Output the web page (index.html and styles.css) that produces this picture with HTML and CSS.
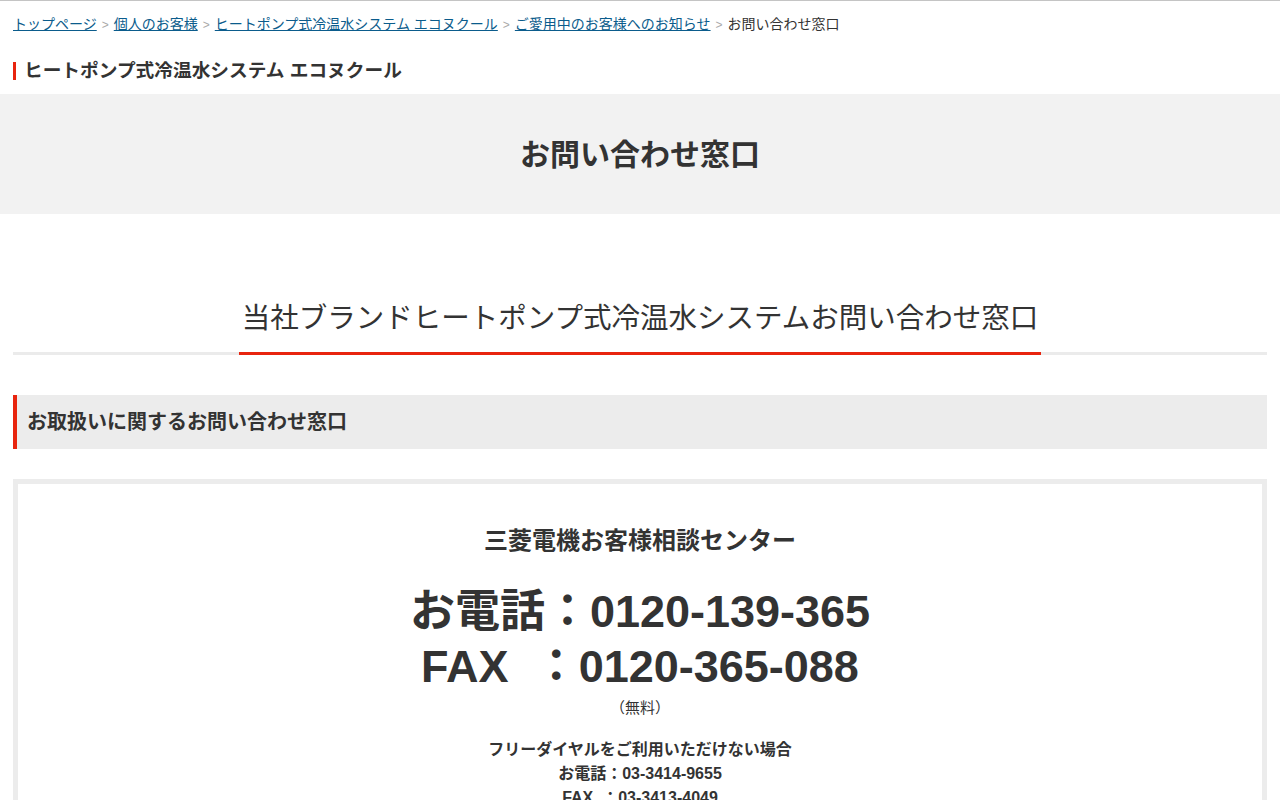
FILE: index.html
```html
<!DOCTYPE html>
<html lang="ja">
<head>
<meta charset="utf-8">
<title>お問い合わせ窓口</title>
<link rel="stylesheet" href="styles.css">
</head>
<body>
<div class="topline"></div>
<nav class="breadcrumb">
  <a href="#">トップページ</a><span class="sep">&gt;</span><a href="#">個人のお客様</a><span class="sep">&gt;</span><a href="#">ヒートポンプ式冷温水システム エコヌクール</a><span class="sep">&gt;</span><a href="#">ご愛用中のお客様へのお知らせ</a><span class="sep">&gt;</span><span class="current">お問い合わせ窓口</span>
</nav>
<div class="category"><span class="category-title">ヒートポンプ式冷温水システム エコヌクール</span></div>
<div class="page-band"><h1>お問い合わせ窓口</h1></div>
<main class="content">
  <div class="h2-wrap"><h2>当社ブランドヒートポンプ式冷温水システムお問い合わせ窓口</h2></div>
  <h3>お取扱いに関するお問い合わせ窓口</h3>
  <section class="contact-box">
    <p class="center-name">三菱電機お客様相談センター</p>
    <p class="big-tel">お電話：0120-139-365<br>FAX&nbsp;&nbsp;：0120-365-088</p>
    <p class="free">（無料）</p>
    <p class="alt">フリーダイヤルをご利用いただけない場合<br>お電話：03-3414-9655<br>FAX&nbsp;&nbsp;：03-3413-4049</p>
  </section>
</main>
</body>
</html>
```
FILE: styles.css
```css
* { box-sizing: border-box; }
html, body { margin: 0; padding: 0; }
body {
  font-family: "Liberation Sans", "Noto Sans CJK JP", sans-serif;
  color: #333;
  background: #fff;
}
.topline { height: 1px; background: #c4c4c4; }
.breadcrumb {
  padding: 13px 13px 0;
  font-size: 14px;
  line-height: 20px;
  height: 46px;
  white-space: nowrap;
}
.breadcrumb a { color: #0b5c8c; text-decoration: underline; }
.breadcrumb .sep { color: #aaa; font-size: 12px; margin: 0 5px; }
.breadcrumb .current { color: #333; }
.category { padding: 0 13px; height: 47px; }
.category-title {
  display: inline-block;
  font-size: 18.7px;
  font-weight: bold;
  line-height: 18px;
  padding-left: 8px;
  border-left: 3px solid #e8240e;
  margin-top: 15px;
}
.page-band {
  background: #f2f2f2;
  height: 120px;
  display: flex;
  align-items: center;
  justify-content: center;
}
.page-band h1 { margin: 0; font-size: 30px; font-weight: bold; line-height: 1; padding-top: 2px; }
.content { padding: 0 13px; }
.h2-wrap {
  margin-top: 80px;
  text-align: center;
  border-bottom: 3px solid #ebebeb;
  height: 61px;
}
.h2-wrap h2 {
  display: inline-block;
  margin: 0;
  font-size: 28.5px;
  font-weight: normal;
  line-height: 40px;
  padding: 4px 3px 14px;
  border-bottom: 3px solid #e8240e;
}
h3 {
  margin: 40px 0 0;
  background: #ececec;
  border-left: 4px solid #e8240e;
  font-size: 20px;
  font-weight: bold;
  height: 54px;
  line-height: 54px;
  padding-left: 10px;
}
.contact-box {
  margin-top: 30px;
  border: 5px solid #ececec;
  text-align: center;
  padding: 42px 0 40px;
}
.contact-box p { margin: 0; }
.center-name { font-size: 24px; font-weight: bold; line-height: 30px; }
.big-tel { font-size: 45px; font-weight: bold; line-height: 55px; margin-top: 28px !important; }
.free { font-size: 15px; line-height: 24px; margin-top: 2px !important; }
.alt { font-size: 16px; font-weight: bold; line-height: 24px; margin-top: 18px !important; }
```
